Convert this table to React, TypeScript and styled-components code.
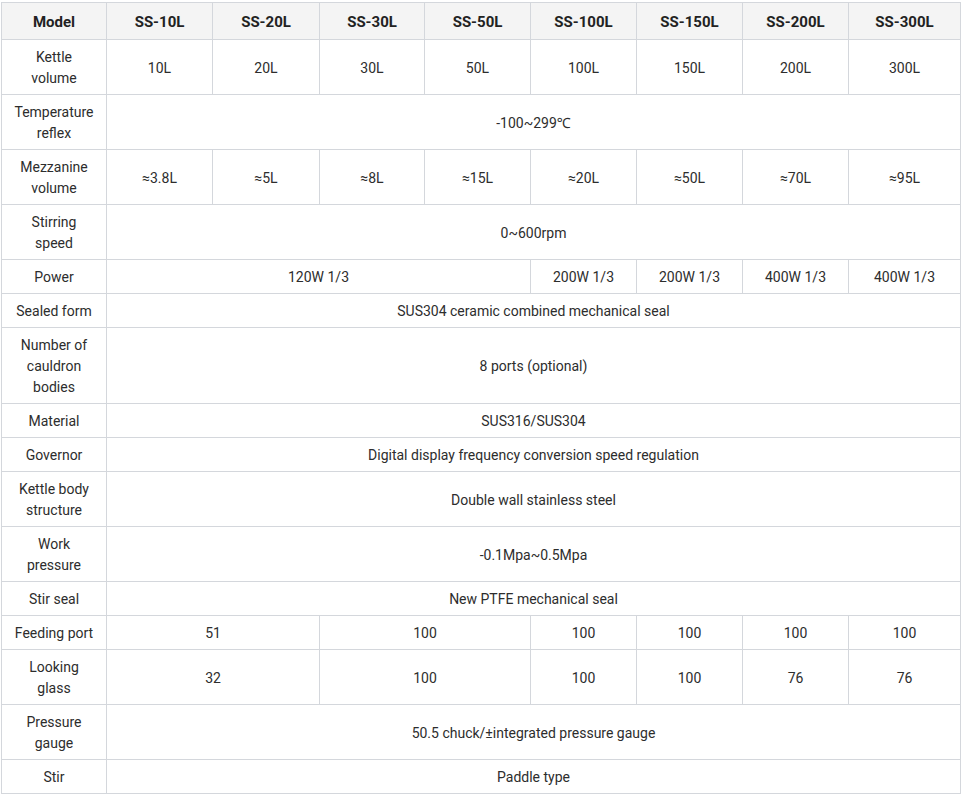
import React from "react";
import styled, { createGlobalStyle } from "styled-components";

const GlobalStyle = createGlobalStyle`
  html, body {
    margin: 0;
    padding: 0;
    background: #ffffff;
  }
  body {
    font-family: Roboto, "Noto Sans", Arial, sans-serif;
  }
`;

type Cell = { text: string; span?: number };
type Row = { label: string; cells: Cell[] };

const models = ["SS-10L", "SS-20L", "SS-30L", "SS-50L", "SS-100L", "SS-150L", "SS-200L", "SS-300L"];

const colWidths = [105, 106, 107, 105, 106, 106, 106, 106];

const each = (vals: string[]): Cell[] => vals.map((text) => ({ text }));
const all = (text: string): Cell[] => [{ text, span: 8 }];

const rows: Row[] = [
  { label: "Kettle volume", cells: each(["10L", "20L", "30L", "50L", "100L", "150L", "200L", "300L"]) },
  { label: "Temperature reflex", cells: all("-100~299℃") },
  { label: "Mezzanine volume", cells: each(["≈3.8L", "≈5L", "≈8L", "≈15L", "≈20L", "≈50L", "≈70L", "≈95L"]) },
  { label: "Stirring speed", cells: all("0~600rpm") },
  {
    label: "Power",
    cells: [{ text: "120W 1/3", span: 4 }, ...each(["200W 1/3", "200W 1/3", "400W 1/3", "400W 1/3"])],
  },
  { label: "Sealed form", cells: all("SUS304 ceramic combined mechanical seal") },
  { label: "Number of cauldron bodies", cells: all("8 ports (optional)") },
  { label: "Material", cells: all("SUS316/SUS304") },
  { label: "Governor", cells: all("Digital display frequency conversion speed regulation") },
  { label: "Kettle body structure", cells: all("Double wall stainless steel") },
  { label: "Work pressure", cells: all("-0.1Mpa~0.5Mpa") },
  { label: "Stir seal", cells: all("New PTFE mechanical seal") },
  {
    label: "Feeding port",
    cells: [{ text: "51", span: 2 }, { text: "100", span: 2 }, ...each(["100", "100", "100", "100"])],
  },
  {
    label: "Looking glass",
    cells: [{ text: "32", span: 2 }, { text: "100", span: 2 }, ...each(["100", "100", "76", "76"])],
  },
  { label: "Pressure gauge", cells: all("50.5 chuck/±integrated pressure gauge") },
  { label: "Stir", cells: all("Paddle type") },
];

export default function App() {
  return (
    <Page>
      <GlobalStyle />
      <SpecTable>
        <colgroup>
          {colWidths.map((w, i) => (
            <col key={i} style={{ width: w }} />
          ))}
          <col />
        </colgroup>
        <thead>
          <tr>
            <Head>Model</Head>
            {models.map((m) => (
              <Head key={m}>{m}</Head>
            ))}
          </tr>
        </thead>
        <tbody>
          {rows.map((r) => (
            <tr key={r.label}>
              <Label>{r.label}</Label>
              {r.cells.map((c, i) => (
                <Data key={i} colSpan={c.span || 1}>
                  {c.text}
                </Data>
              ))}
            </tr>
          ))}
        </tbody>
      </SpecTable>
    </Page>
  );
}

const Page = styled.div`
  padding: 2px 0 0 1px;
`;

const SpecTable = styled.table`
  width: 960px;
  table-layout: fixed;
  border-collapse: collapse;
  border: 1px solid #d4d7dc;
  color: #2d2d2d;
  font-size: 14px;
`;

const Head = styled.th`
  background: #f4f4f4;
  border: 1px solid #d4d7dc;
  padding: 7px 4px 5px;
  font-size: 15px;
  line-height: 24px;
  font-weight: 700;
  color: #222222;
  text-align: center;
`;

const Data = styled.td`
  border: 1px solid #d4d7dc;
  padding: 7px 8px 5px;
  line-height: 21px;
  text-align: center;
  vertical-align: middle;
`;

const Label = styled(Data)`
  padding: 7px 12px 5px;
`;
